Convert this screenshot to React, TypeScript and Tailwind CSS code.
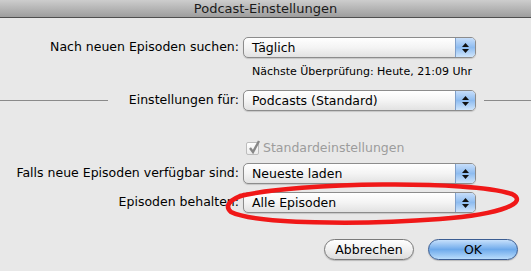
const font = { fontFamily: '"DejaVu Sans", "Liberation Sans", sans-serif' };

function Popup({ value }: { value: string }) {
  return (
    <div className="relative flex h-[21px] w-[233px] items-stretch rounded-[5px] border border-[#8c8c8c] bg-gradient-to-b from-white via-[#f4f4f4] to-[#e2e2e2] shadow-[0_1px_1px_rgba(0,0,0,0.15)] overflow-hidden">
      <span className="flex-1 pl-[8px] text-[12.5px] leading-[19px] text-black">{value}</span>
      <span className="flex w-[20px] flex-col items-center justify-center gap-[2px] border-l border-[#7f9fc9] bg-gradient-to-b from-[#c7defa] via-[#8ebcf0] to-[#cfe5fb]">
        <svg width="7" height="4" viewBox="0 0 7 4"><path d="M3.5 0 L7 4 L0 4 Z" fill="#111" /></svg>
        <svg width="7" height="4" viewBox="0 0 7 4"><path d="M0 0 L7 0 L3.5 4 Z" fill="#111" /></svg>
      </span>
    </div>
  );
}

function Row({ label, value }: { label: string; value: string }) {
  return (
    <div className="flex items-center">
      <div className="w-[240px] shrink-0 pr-[1px] text-right text-[12.5px] text-black">{label}</div>
      <div className="ml-[3px]">
        <Popup value={value} />
      </div>
    </div>
  );
}

export default function App() {
  return (
    <div className="relative h-[271px] w-[531px] overflow-hidden bg-[#e8e8e8]" style={font}>
      {/* Title bar */}
      <div className="flex h-[18px] items-center justify-center border-b border-[#4f4f4f] bg-gradient-to-b from-[#cdcdcd] to-[#9e9e9e] text-[13px] text-[#1a1a1a]">
        Podcast-Einstellungen
      </div>

      <div className="flex flex-col pt-[19px]">
        <Row label="Nach neuen Episoden suchen:" value="Täglich" />

        <div className="mt-[7px] h-[13px] pl-[252px] text-[11px] leading-[13px] text-black">
          Nächste Überprüfung: Heute, 21:09 Uhr
        </div>

        {/* Einstellungen für */}
        <div className="mt-[12px] flex items-center">
          <div className="flex w-[240px] shrink-0 items-center pr-[1px]">
            <div className="h-px w-[108px] bg-[#8a8a8a]" />
            <div className="flex-1 text-right text-[12.5px] text-black">Einstellungen für:</div>
          </div>
          <div className="ml-[3px]">
            <Popup value="Podcasts (Standard)" />
          </div>
          <div className="ml-[8px] h-px flex-1 bg-[#8a8a8a]" />
        </div>

        {/* Checkbox */}
        <div className="mt-[30px] flex h-[14px] items-center pl-[246px]">
          <span className="relative h-[13px] w-[13px] rounded-[2px] border border-[#bdbdbd] bg-gradient-to-b from-white to-[#ececec]">
            <svg className="absolute -top-[3px] left-[1px]" width="13" height="15" viewBox="0 0 13 15">
              <path d="M2 8 L5 12 L11 1" fill="none" stroke="#888888" strokeWidth="2.4" />
            </svg>
          </span>
          <span className="ml-[4px] text-[12.5px] text-[#9c9c9c]">Standardeinstellungen</span>
        </div>

        <div className="mt-[8px]">
          <Row label="Falls neue Episoden verfügbar sind:" value="Neueste laden" />
        </div>
        <div className="mt-[8px]">
          <Row label="Episoden behalten:" value="Alle Episoden" />
        </div>

        {/* Buttons */}
        <div className="mt-[26px] flex justify-end gap-[14px] pr-[13px]">
          <button className="h-[21px] w-[90px] rounded-full border border-[#7a7a7a] bg-gradient-to-b from-white via-[#f0f0f0] to-[#dcdcdc] text-[12.5px] leading-[19px] text-black shadow-[0_1px_1px_rgba(0,0,0,0.2)]">
            Abbrechen
          </button>
          <button className="h-[21px] w-[90px] rounded-full border border-[#3b5d92] bg-gradient-to-b from-[#c6e0fb] via-[#6eaaeb] to-[#b9dcfb] text-[12.5px] leading-[19px] text-black shadow-[0_1px_1px_rgba(0,0,0,0.2)]">
            OK
          </button>
        </div>
      </div>

      {/* Red annotation ellipse */}
      <svg className="pointer-events-none absolute left-0 top-0" width="531" height="271" viewBox="0 0 531 271">
        <path
          d="M240 196 C 300 182, 470 180, 512 194 C 528 202, 505 214, 440 219 C 360 225, 255 224, 231 212 C 224 206, 230 199, 244 195"
          fill="none"
          stroke="#f01818"
          strokeWidth="4.5"
          strokeLinecap="round"
        />
      </svg>
    </div>
  );
}
